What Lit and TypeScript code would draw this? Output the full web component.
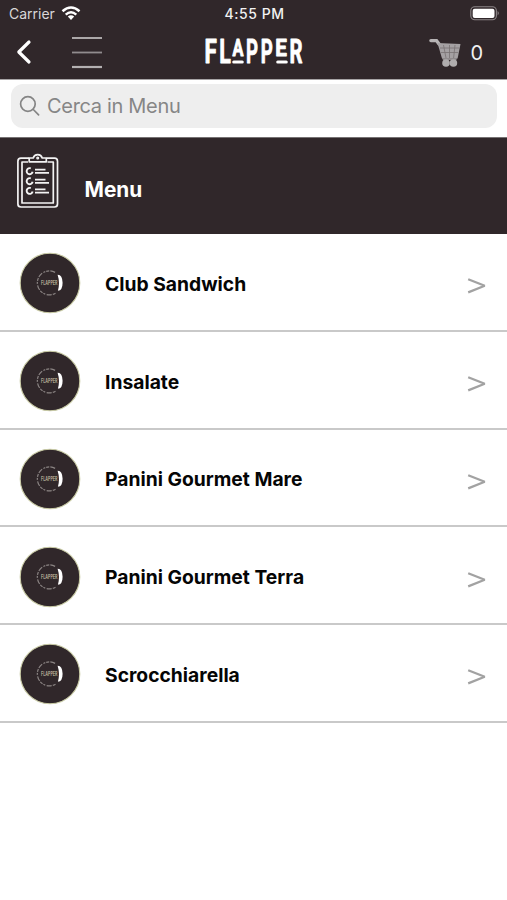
import { LitElement, html, css, svg } from "lit";
import { customElement, property } from "lit/decorators.js";

@customElement("flapper-badge")
class FlapperBadge extends LitElement {
  static styles = css`
    :host { display: block; width: 62px; height: 62px; }
    svg { display: block; }
    text { font-family: Inter, "Liberation Sans", sans-serif; font-weight: 700; }
  `;
  render() {
    return html`<svg width="62" height="62" viewBox="0 0 62 62">
      <circle cx="31" cy="31" r="29.8" fill="#30272a" stroke="#c9cba6" stroke-width="1.1"/>
      <path d="M36.5 41.2 A12 12 0 1 1 36.5 20.6" fill="none" stroke="#a9a4a2" stroke-width="1.2" stroke-dasharray="3 1.1 5 1.5 2 1" opacity=".75"/>
      <path d="M38.6 22.8 Q43.3 22.5 43.6 30.8 Q43.6 38.5 38.9 38.8 Q41.2 30.8 38.6 22.8Z" fill="#fff"/>
      <text x="22" y="33.3" font-size="6" textLength="16.5" lengthAdjust="spacingAndGlyphs" fill="#b0a893">FLAPPER</text>
    </svg>`;
  }
}

@customElement("category-row")
class CategoryRow extends LitElement {
  @property() label = "";
  static styles = css`
    :host {
      box-sizing: border-box; display: flex; align-items: center; height: 97.75px;
      padding: 3px 20px 0 19px; border-bottom: 2px solid #c9c9c9; background: #fff;
    }
    .label { flex: 1; margin-left: 24px; font: 650 19.3px/26px Inter, "Liberation Sans", sans-serif; color: #050505; white-space: nowrap; padding-top: 1px; }
    .arrow { margin-top: 6px; }
  `;
  render() {
    return html`<flapper-badge></flapper-badge>
      <span class="label">${this.label}</span>
      <svg class="arrow" width="20" height="18" viewBox="0 0 20 18">
        <path d="M1.2 2.2 L17.7 8.8 L1.2 15.4" fill="none" stroke="#a2a2a2" stroke-width="2.3" stroke-linejoin="bevel"/>
      </svg>`;
  }
}

/* Each letter is condensed by sx; the A and E are shorter and underlined. */
const WORDMARK = [
  { c: "F", x: 204.4, sx: 0.66, tall: true },
  { c: "L", x: 219.2, sx: 0.63, tall: true },
  { c: "A", x: 232.4, sx: 0.68, tall: false },
  { c: "P", x: 246, sx: 0.55, tall: true },
  { c: "P", x: 260.8, sx: 0.55, tall: true },
  { c: "E", x: 275.3, sx: 0.86, tall: false },
  { c: "R", x: 289.6, sx: 0.6, tall: true },
];

@customElement("app-root")
class AppRoot extends LitElement {
  static styles = css`
    :host { display: block; height: 900px; overflow: hidden; background: #fff; font-family: Inter, "Liberation Sans", sans-serif; }
    svg { display: block; }
    .top { height: 79px; background: #30272a; color: #f2f2f2; border-bottom: 1px solid #a7a4a5; }
    .status { display: grid; grid-template-columns: 1fr auto 1fr; align-items: center; height: 27px; padding: 0 7px 0 9px; font-size: 14px; }
    .carrier { display: flex; align-items: center; gap: 6px; color: #d9d7d8; }
    .time { font-weight: 550; letter-spacing: .52px; }
    .battery { justify-self: end; }
    .nav { display: grid; grid-template-columns: 1fr auto 1fr; height: 50px; align-items: center; }
    .left { display: flex; align-items: center; gap: 39px; padding-left: 16px; }
    .right { display: flex; align-items: center; justify-content: flex-end; gap: 9px; padding: 1px 24px 0 0; font-size: 20px; }
    .logo text { font-family: Roboto, "Liberation Sans", sans-serif; font-weight: 700; fill: #fff; stroke: #fff; stroke-width: .9; stroke-linejoin: round; }
    .searchbar { box-sizing: border-box; height: 57px; padding: 4px 10px 9px 11px; }
    .field { display: flex; align-items: center; gap: 7px; height: 44px; padding-left: 8px; border-radius: 12px; background: #eee; color: #868686; font-size: 20px; letter-spacing: -.32px; }
    .title { box-sizing: border-box; display: flex; height: 97px; background: #30272a; color: #fff; border-top: 1px solid #767273; }
    .clip { margin: 15px 0 0 16px; }
    .title span { margin: 39px 0 0 24.5px; font-weight: 650; font-size: 20.8px; line-height: 26px; }
  `;
  render() {
    return html`
      <header class="top">
        <div class="status">
          <span class="carrier"><span>Carrier</span>
            <svg width="20" height="15" viewBox="0 0 20 15" fill="none" stroke="#fff" stroke-width="2.5">
              <path d="M1.5 5.3 Q10 -2.2 18.5 5.3"/><path d="M4.7 8.6 Q10 4 15.3 8.6"/>
              <path d="M6.8 10.4 Q10 8.2 13.2 10.4 L10 14Z" fill="#fff" stroke="none"/>
            </svg>
          </span>
          <span class="time">4:55 PM</span>
          <svg class="battery" width="30" height="15" viewBox="0 0 30 15">
            <rect x=".8" y=".8" width="25.6" height="13" rx="4" fill="none" stroke="#8b8587" stroke-width="1.1"/>
            <rect x="2.7" y="2.7" width="21.8" height="9.2" rx="2" fill="#fff"/>
            <path d="M27.6 5 Q30 7.2 27.6 9.5Z" fill="#8b8587"/>
          </svg>
        </div>
        <div class="nav">
          <div class="left">
            <svg width="16" height="26" viewBox="0 0 16 26"><path d="M13 3 L2.8 13 L13 23" fill="none" stroke="#fff" stroke-width="3.2" stroke-linecap="round" stroke-linejoin="round"/></svg>
            <svg width="32" height="34" viewBox="0 0 32 34">
              <path d="M1 3H31" stroke="#b9b6b7" stroke-width="1.8"/><path d="M1 17.5H31" stroke="#918c8e" stroke-width="1.8"/><path d="M1 32H31" stroke="#b3b0b1" stroke-width="2.2"/>
            </svg>
          </div>
          <svg class="logo" width="106" height="48" viewBox="201 27 106 48">
            ${WORDMARK.map((l) => svg`<text transform=${`translate(${l.x} ${l.tall ? 62.2 : 55}) scale(${l.sx} 1)`} font-size=${l.tall ? 34 : 24}>${l.c}</text>`)}
            <path d="M233.7 60.9H242.3M277.7 60.9H286.3" stroke="#fff" stroke-width="3" stroke-linecap="round"/>
          </svg>
          <div class="right">
            <svg width="32" height="30" viewBox="0 0 32 30">
              <path d="M1.9 2.6 H7.5 L10 6" fill="none" stroke="#b7b4b5" stroke-width="3.4" stroke-linecap="round"/>
              <path d="M8.5 5 L31.5 6 L28.6 20.5 H13Z" fill="#a5a1a3"/>
              <path d="M11 10 H30 M12 14.5 H29 M14.5 7 L17 20 M20.5 7V20 M26 7 L24.6 20" stroke="#787274" stroke-width=".8"/>
              <path d="M13 20 H28 L27.4 22 H14Z" fill="#8f8a8c"/>
              <circle cx="17" cy="25" r="3.8" fill="#b0adae"/><circle cx="24.4" cy="25" r="3.8" fill="#b0adae"/>
            </svg>
            <span>0</span>
          </div>
        </div>
      </header>
      <div class="searchbar"><div class="field">
        <svg width="21" height="22" viewBox="0 0 21 22" fill="none" stroke="#858585" stroke-width="1.7" stroke-linecap="round"><circle cx="8.9" cy="9" r="7.3"/><path d="M14.3 14.5 L19.6 19.8"/></svg>
        <span>Cerca in Menu</span>
      </div></div>
      <section class="title">
        <svg class="clip" width="44" height="56" viewBox="0 0 44 56" fill="none" stroke="#f3f3f3" stroke-width="1.7" stroke-linejoin="round">
          <path d="M13 5.2 H5 Q1.9 5.2 1.9 8.3 V51 Q1.9 54 5 54 H38.5 Q41.5 54 41.5 51 V8.3 Q41.5 5.2 38.5 5.2 H30.5"/>
          <path d="M12 9 H6 V50 H37.3 V9 H31.5"/>
          <path d="M13.2 8.8 V5 H17.2 Q18.2 1.7 21.7 1.7 Q25.2 1.7 26.2 5 H30.3 V8.8Z"/><circle cx="21.7" cy="5" r=".7"/>
          ${[18, 28, 37.7].map((y) => svg`<g><path d=${`M14.8 ${y - 2.6} A3 3 0 1 0 16.6 ${y + 0.8}`} stroke-width="1.9"/><path d=${`M19 ${y - 1.3}H29.5M19 ${y + 1.9}H33`}/></g>`)}
        </svg>
        <span>Menu</span>
      </section>
      <main>
        ${["Club Sandwich", "Insalate", "Panini Gourmet Mare", "Panini Gourmet Terra", "Scrocchiarella"].map((n) => html`<category-row .label=${n}></category-row>`)}
      </main>`;
  }
}
